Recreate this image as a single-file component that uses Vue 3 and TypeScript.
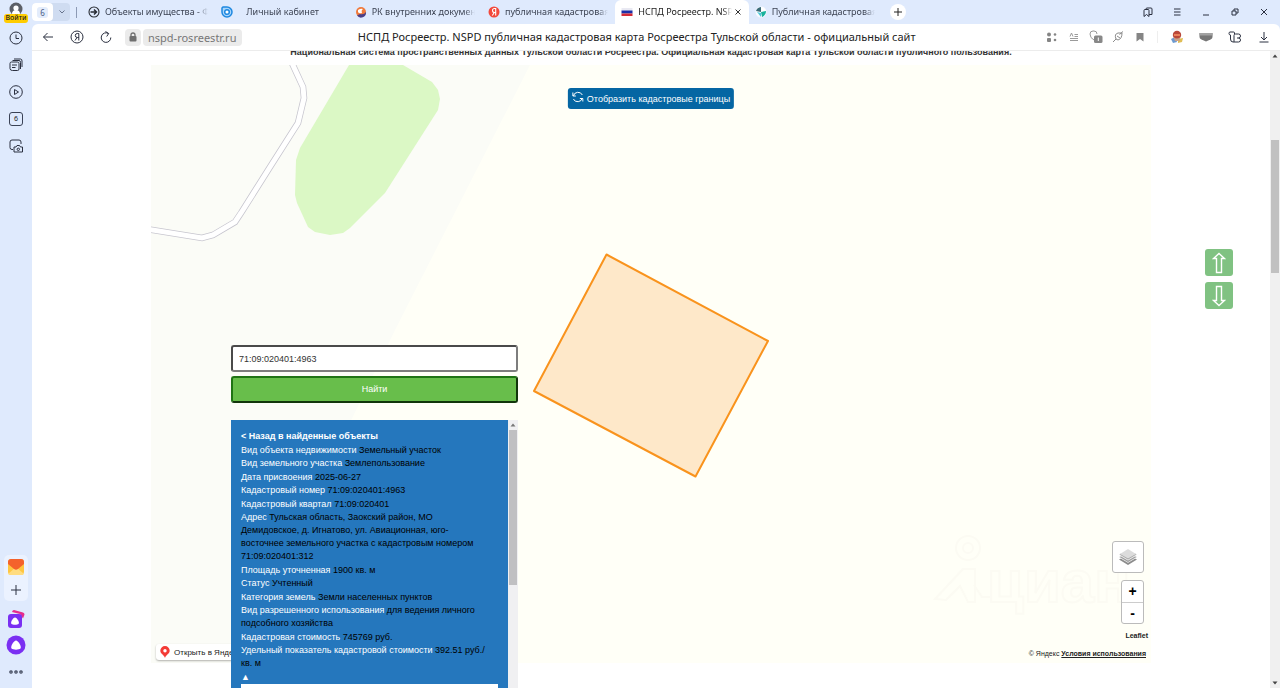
<script setup lang="ts">
import { ref } from 'vue'

interface Tab {
  title: string
  icon: 'arrow' | 'cabinet' | 'rk' | 'yandex' | 'flag' | 'map'
  active?: boolean
  wide?: boolean
}

interface Fact {
  label: string
  value: string
}

const tabs: Tab[] = [
  { title: 'Объекты имущества - ФКП', icon: 'arrow' },
  { title: 'Личный кабинет', icon: 'cabinet', wide: true },
  { title: 'РК внутренних документов', icon: 'rk' },
  { title: 'публичная кадастровая карта', icon: 'yandex' },
  { title: 'НСПД Росреестр. NSPD', icon: 'flag', active: true },
  { title: 'Публичная кадастровая карта', icon: 'map' },
]

const facts: Fact[] = [
  { label: 'Вид объекта недвижимости', value: 'Земельный участок' },
  { label: 'Вид земельного участка', value: 'Землепользование' },
  { label: 'Дата присвоения', value: '2025-06-27' },
  { label: 'Кадастровый номер', value: '71:09:020401:4963' },
  { label: 'Кадастровый квартал', value: '71:09:020401' },
  {
    label: 'Адрес',
    value:
      'Тульская область, Заокский район, МО Демидовское, д. Игнатово, ул. Авиационная, юго-восточнее земельного участка с кадастровым номером 71:09:020401:312',
  },
  { label: 'Площадь уточненная', value: '1900 кв. м' },
  { label: 'Статус', value: 'Учтенный' },
  { label: 'Категория земель', value: 'Земли населенных пунктов' },
  { label: 'Вид разрешенного использования', value: 'для ведения личного подсобного хозяйства' },
  { label: 'Кадастровая стоимость', value: '745769 руб.' },
  { label: 'Удельный показатель кадастровой стоимости', value: '392.51 руб./кв. м' },
]

const query = ref('71:09:020401:4963')
</script>

<template>
  <div class="browser">
    <aside class="side">
      <button class="login" aria-label="Войти">
        <svg width="16" height="13" viewBox="0 0 16 13">
          <circle cx="8" cy="8" r="6.5" fill="#5c5f66" />
          <circle cx="8" cy="7" r="2.6" fill="#fff" />
          <path d="M4 13c0-2.500 1.500-4 4-4s4 1.500 4 4z" fill="#fff" />
        </svg>
        <span>Войти</span>
      </button>
      <button class="side-btn" aria-label="История">
        <svg class="line" width="14" height="14" viewBox="0 0 14 14"><circle cx="7" cy="7" r="6" /><path d="M7 3.500V7.500H10" /></svg>
      </button>
      <button class="side-btn" aria-label="Коллекции">
        <svg class="line" width="14" height="14" viewBox="0 0 14 14">
          <path d="M2.500 4h6q1.500 0 1.500 1.500V11q0 1.500-1.500 1.500H3.500Q1 12.500 1 10.500V5.500Q1 4 2.500 4zM3 7h5M3 9.500h3.500M3.500 2.500h6.500q1.500 0 1.500 2V11M5 1h6.500Q13 1 13 3v6" />
        </svg>
      </button>
      <button class="side-btn" aria-label="Видео">
        <svg class="line" width="14" height="14" viewBox="0 0 14 14"><circle cx="7" cy="7" r="6.300" /><path d="M5.500 4.500v5l4-2.500z" /></svg>
      </button>
      <button class="side-btn" aria-label="Вкладки">
        <span class="count">6</span>
      </button>
      <button class="side-btn" aria-label="Снимок экрана">
        <svg class="line" width="14" height="14" viewBox="0 0 14 14">
          <path d="M4 10.500H3q-2 0-2-2V3q0-2 2-2h7q2 0 2 2v2M5 8h2l1-1.500h2.500l1 1.500h2v5H5z" /><circle cx="9.300" cy="10.300" r="1.200" />
        </svg>
      </button>
      <div class="side-gap"></div>
      <div class="side-box">
        <button class="side-app" aria-label="Почта">
          <svg width="16" height="16" viewBox="0 0 16 16">
            <rect width="16" height="16" rx="3.500" fill="#ffc640" />
            <path d="M0 15L8 8l8 7q-1 1-3 1H3q-2 0-3-1z" fill="#ffdc80" />
            <path d="M0 5V3q0-3 3-3h10q3 0 3 3v2l-6 5q-2 1.500-4 0z" fill="#f4622c" />
          </svg>
        </button>
        <button class="side-app" aria-label="Добавить">
          <svg class="line" width="12" height="12" viewBox="0 0 12 12"><path d="M6 1v10M1 6h10" /></svg>
        </button>
      </div>
      <button class="side-alice" aria-label="Алиса: картинки">
        <svg width="18" height="20" viewBox="0 0 18 20">
          <path d="M5 3q.5-2 2-2l9 2.500q1.500.500 1.500 2L16 9.500 13 5z" fill="#e52d8c" />
          <rect x="1" y="5" width="14" height="14" rx="3" fill="#7a2ff2" />
          <path d="M8 8.500c2 0 5 5 3.500 6.500-1 1-6 1-7 0C3 13.500 6 8.500 8 8.500z" fill="#fff" />
        </svg>
      </button>
      <button class="side-alice" aria-label="Алиса">
        <svg width="20" height="20" viewBox="0 0 20 20">
          <circle cx="10" cy="10" r="9.500" fill="#7a2ff2" />
          <path d="M10 5.500c2 0 6 6 4.500 8-1.500 1.500-7.500 1.500-9 0C4 11.500 8 5.500 10 5.500z" fill="#fff" />
        </svg>
      </button>
      <button class="side-btn" aria-label="Ещё">
        <svg width="14" height="4" viewBox="0 0 14 4" fill="none" stroke="#3a4256" stroke-width="1.200">
          <circle cx="2" cy="2" r="1.200" /><circle cx="7" cy="2" r="1.200" /><circle cx="12" cy="2" r="1.200" />
        </svg>
      </button>
    </aside>

    <div class="window">
      <header class="tabbar">
        <div class="group">
          <button class="group-count"><span>6</span></button>
          <button class="group-more" aria-label="Группы вкладок">
            <svg width="8" height="6" viewBox="0 0 8 6" fill="none" stroke="#67738c"><path d="M1.500 1.500L4 4l2.500-2.500" /></svg>
          </button>
        </div>
        <nav class="tabs">
          <a v-for="tab in tabs" :key="tab.title" href="#" class="tab" :class="{ active: tab.active, wide: tab.wide }">
            <svg class="fav" width="12" height="12" viewBox="0 0 12 12">
              <g v-if="tab.icon === 'arrow'" fill="none" stroke="#272b33" stroke-width="1.100">
                <circle cx="6" cy="6" r="5" /><path d="M2.500 6h6M6 3.500L8.500 6 6 8.500" stroke-width="1.500" />
              </g>
              <g v-else-if="tab.icon === 'cabinet'" fill="none" stroke="#1e88e0" stroke-width="1.500">
                <path d="M2 1h4a5 5 0 1 1-5 5V2z" fill="#a9d5fb" /><circle cx="6" cy="6" r="2.300" fill="#fff" />
              </g>
              <g v-else-if="tab.icon === 'rk'">
                <circle cx="6" cy="6" r="5" fill="#f07a3c" /><path d="M2 9.500A5 5 0 0 0 11 6Q9 9 5 8z" fill="#4b3f87" />
                <path d="M3 4q3-2 5-1-2 1-1 4-3 1-4-1z" fill="#fff" />
              </g>
              <g v-else-if="tab.icon === 'yandex'">
                <circle cx="6" cy="6" r="5.500" fill="#f2493b" />
                <path d="M7.700 9.500v-7H6.500q-2 0-2 2t2 2h1.200M6.300 6.500L4.300 9.500" fill="none" stroke="#fff" stroke-width="1.100" />
              </g>
              <g v-else-if="tab.icon === 'flag'">
                <path d="M0.500 2h11v3H.5z" fill="#e9e9f2" /><path d="M.5 4.500h11v3H.5z" fill="#1c2fa8" /><path d="M.5 7.500h11V10H.5z" fill="#d52b36" />
              </g>
              <g v-else>
                <circle cx="6" cy="6" r="5.500" fill="#f8fbff" />
                <path d="M1 5q1-3.500 5-4v5z" fill="#3c6c78" /><path d="M6 1q4 .5 5 5L6 6z" fill="#fff" /><path d="M6 6l5-1q0 4-4 6z" fill="#19b29c" /><path d="M2 6l4 5V7z" fill="#4cc8d8" />
              </g>
            </svg>
            <span class="tab-title">{{ tab.title }}</span>
            <svg v-if="tab.active" class="close" width="8" height="8" viewBox="0 0 8 8" stroke="#333"><path d="M1.500 1.500l5 5M6.500 1.500l-5 5" /></svg>
          </a>
        </nav>
        <button class="new-tab" aria-label="Новая вкладка">
          <svg width="10" height="10" viewBox="0 0 10 10" stroke="#222"><path d="M5 1v8M1 5h8" /></svg>
        </button>
        <div class="window-controls">
          <button aria-label="Панель закладок">
            <svg class="line" width="10" height="10" viewBox="0 0 10 10"><path d="M1 3.500q0-1 1-1h3q1 0 1 1v6L3.500 7.500 1 9.500zM3 2.500V2q0-1 1-1h4q1 0 1 1v5.500H6" /></svg>
          </button>
          <button aria-label="Меню">
            <svg class="line" width="10" height="10" viewBox="0 0 10 10"><path d="M2 2h6.500M2 5h6.500M2 8h6.500" /></svg>
          </button>
          <button aria-label="Свернуть">
            <svg class="line" width="10" height="10" viewBox="0 0 10 10"><path d="M2 8h6" /></svg>
          </button>
          <button aria-label="Развернуть">
            <svg class="line" width="10" height="10" viewBox="0 0 10 10"><path d="M2 4h4v4H2zM4 4V2h4v4H6" /></svg>
          </button>
          <button aria-label="Закрыть">
            <svg class="line" width="10" height="10" viewBox="0 0 10 10"><path d="M2 2l6 6M8 2l-6 6" /></svg>
          </button>
        </div>
      </header>

      <div class="toolbar">
        <button class="tool" aria-label="Назад">
          <svg class="line" width="12" height="12" viewBox="0 0 12 12"><path d="M11 6H1.500M5.500 2l-4 4 4 4" /></svg>
        </button>
        <button class="tool" aria-label="Яндекс">
          <svg class="line" width="14" height="14" viewBox="0 0 14 14"><circle cx="7" cy="7" r="6" /><path d="M8.800 10.500v-7H7.300q-2 0-2 2t2 2h1.500M7 7.500l-2 3" /></svg>
        </button>
        <button class="tool" aria-label="Обновить">
          <svg class="line" width="12" height="12" viewBox="0 0 12 12"><path d="M10.800 6.500A4.800 4.800 0 1 1 8.500 2.500M5.500.5l3.200 2-2 3" /></svg>
        </button>
        <button class="lock" aria-label="Сведения о сайте">
          <svg width="8" height="10" viewBox="0 0 8 10"><rect x="0.500" y="4" width="7" height="5.500" rx="1" fill="#6f6f6f" /><path d="M2 4V3q0-2 2-2t2 2v1" fill="none" stroke="#6f6f6f" stroke-width="1.300" /></svg>
        </button>
        <a class="host" href="#">nspd-rosreestr.ru</a>
        <div class="doc-title">НСПД Росреестр. NSPD публичная кадастровая карта Росреестра Тульской области - официальный сайт</div>
        <div class="page-tools">
          <button aria-label="Сервисы">
            <svg width="12" height="12" viewBox="0 0 12 12" fill="#858585"><circle cx="3" cy="3.500" r="2" /><rect x="1" y="7" width="4" height="4" rx="1" /><circle cx="9" cy="3.500" r="1.300" /><circle cx="9" cy="9" r="1.300" /></svg>
          </button>
          <button aria-label="Режим чтения">
            <svg width="10" height="10" viewBox="0 0 10 10" fill="none" stroke="#9b9b9b"><path d="M1 4.500L2.500 1 4 4.500M5.500 2.500H9M5.500 4.500H9M1 6.500h8M1 8.500h8" /></svg>
          </button>
          <button aria-label="Защита">
            <svg width="14" height="14" viewBox="0 0 14 14"><path d="M1 4q0-3 3-3h1q3 0 3 3M1 4q0 4 4 6" fill="none" stroke="#999" /><rect x="5" y="5.500" width="8.500" height="7.500" rx="1.500" fill="#888" /><path d="M9.300 7.500v3.500" stroke="#fff" /></svg>
          </button>
          <button aria-label="Расширение">
            <svg width="12" height="12" viewBox="0 0 12 12" fill="none" stroke="#8b8b8b"><path d="M1 11l3-3M4 8q-2-5 2-6h4q0 6-4 7zM7.500 3.500L11 .5M5 5l3 2" /></svg>
          </button>
          <button aria-label="Закладка">
            <svg width="8" height="10" viewBox="0 0 8 10" fill="#858585"><path d="M.5 1h7v8.500L4 7 .5 9.500z" /></svg>
          </button>
        </div>
        <div class="extensions">
          <button aria-label="Профиль">
            <svg width="14" height="14" viewBox="0 0 14 14"><path d="M1 9l4-2 2 5-4 1z" fill="#6d9ad0" /><path d="M8 9l5-1-1 4-4 1z" fill="#e0bd55" /><circle cx="7" cy="5" r="4.200" fill="#b9483a" /><path d="M3.500 7q3.500 3 7 0l-1 4H5z" fill="#caa188" /><path d="M4 4h6v2H4z" fill="#e9805a" /></svg>
          </button>
          <button aria-label="Переводчик">
            <svg width="14" height="10" viewBox="0 0 14 10"><path d="M.5 1h13v4q0 1.500-2 2.500L7 9.500 2.500 7.500q-2-1-2-2.500z" fill="#777" /><path d="M.5 1h13v2.500H.5z" fill="#a3a3a3" /></svg>
          </button>
          <button aria-label="Дополнения">
            <svg class="line" width="14" height="12" viewBox="0 0 14 12"><path d="M6.500 3V2q0-1-1-1H2Q1 1 1 2.500T2.500 4v4q0 3 2.500 3h1V4.500Q6 3 7.500 3h3Q12.500 3 12.500 5t-2 2H9M10.500 7q2 0 2 2t-2 2H6" /></svg>
          </button>
          <button aria-label="Загрузки">
            <svg class="line" width="12" height="12" viewBox="0 0 12 12"><path d="M6 1v8M3 6l3 3 3-3M1.500 11h9" /></svg>
          </button>
        </div>
      </div>

      <div class="viewport">
        <main class="page">
          <h1>Национальная система пространственных данных Тульской области Росреестра. Официальная кадастровая карта Тульской области публичного пользования.</h1>
          <section class="map">
            <svg class="canvas" viewBox="0 0 1000 598" preserveAspectRatio="xMidYMid slice">
              <rect width="1000" height="598" fill="#fffff7" />
              <path d="M0 0H379L244 265 82 598H0z" fill="#fbfcf7" />
              <path d="M198 0h54l29 17 6 8 2 9-2 11-53 83-35 35-7 5-13 2-15-3-7-5-11-24-2-8 1-35 4-12z" fill="#dbf8c5" />
              <path d="M140-4l12 26 1 11-6 25-28 44-29 46-6 9-22 13-11 3-56-9" fill="none" stroke="#c6c5ce" stroke-width="6.500" />
              <path d="M140-4l12 26 1 11-6 25-28 44-29 46-6 9-22 13-11 3-56-9" fill="none" stroke="#fff" stroke-width="5" />
              <g fill="none" stroke="#fcfbf3" stroke-width="2">
                <circle cx="817" cy="483" r="12" /><circle cx="817" cy="483" r="5" />
                <path d="M784 534l28-30h12v33h-7l-8-16-14 14zM823 520l8 12h8" />
                <text x="836" y="537" font-size="60" font-weight="700">циан</text>
              </g>
              <path d="M455.500 189.500L617 276 544.500 411.500 383 326z" fill="#fee8c9" stroke="#f9931d" stroke-width="2" stroke-linejoin="round" />
            </svg>

            <button class="borders">
              <svg width="12" height="12" viewBox="0 0 12 12" fill="none" stroke="#fff"><path d="M1.500 5A4.800 4.800 0 0 1 10.500 4M10.500 7A4.800 4.800 0 0 1 1.500 8M1 1.500V5h3M11 10.500V7.500H8" /></svg>
              <span>Отобразить кадастровые границы</span>
            </button>

            <a class="open-map" href="#">
              <svg width="10" height="12" viewBox="0 0 10 12"><path d="M5 0a4.700 4.700 0 0 1 4.700 4.700C9.700 8 6 8.500 5 12 4 8.500.3 8 .3 4.700A4.700 4.700 0 0 1 5 0z" fill="#f43b36" /><circle cx="5" cy="4.700" r="1.700" fill="#fff" /></svg>
              Открыть в Яндекс Картах
            </a>

            <div class="controls">
              <button class="layers" aria-label="Слои">
                <svg width="20" height="18" viewBox="0 0 20 18">
                  <path d="M1 11.500l9 5.500 9-5.500-2-1-7 4-7-4z" fill="#8c8c8c" />
                  <path d="M1 9l9 5.500L19 9l-2-1-7 4-7-4z" fill="#a0a0a0" stroke="#fff" stroke-width=".5" />
                  <path d="M1 6.500L10 12l9-5.500-2-1H3z" fill="#a6a6a6" stroke="#fff" stroke-width=".5" />
                  <path d="M10 1l8 5-8 4.500L2 6z" fill="#dcdcdc" />
                </svg>
              </button>
              <div class="zoom">
                <button aria-label="Приблизить">+</button>
                <button aria-label="Отдалить">-</button>
              </div>
              <a class="leaflet" href="#">Leaflet</a>
              <p class="copyright">© Яндекс <a href="#">Условия использования</a></p>
            </div>

            <form class="finder" @submit.prevent>
              <input v-model="query" type="text" aria-label="Кадастровый номер">
              <button class="find" type="submit">Найти</button>
              <div class="result">
                <div class="details">
                  <a class="row back" href="#">&lt; Назад в найденные объекты</a>
                  <p v-for="fact in facts" :key="fact.label" class="row"><span class="label">{{ fact.label }}</span> {{ fact.value }}</p>
                  <p class="row label">▲</p>
                  <div class="sheet"></div>
                </div>
                <div class="inner-scroll">
                  <svg width="6" height="4" viewBox="0 0 6 4"><path d="M0.500 3.500h5L3 .5z" fill="#777" /></svg>
                  <div class="inner-thumb"></div>
                </div>
              </div>
            </form>
          </section>

          <div class="jump">
            <button aria-label="Наверх">
              <svg width="14" height="22" viewBox="0 0 14 22"><path d="M7 1.500l5.500 5H9.500v14h-5v-14h-3z" /></svg>
            </button>
            <button aria-label="Вниз">
              <svg width="14" height="22" viewBox="0 0 14 22"><path d="M7 20.500l5.500-5H9.500v-14h-5v14h-3z" /></svg>
            </button>
          </div>
        </main>
        <div class="page-scroll">
          <svg width="6" height="4" viewBox="0 0 6 4"><path d="M0.500 3.500h5L3 .5z" fill="#444" /></svg>
          <div class="page-thumb"></div>
          <svg width="6" height="4" viewBox="0 0 6 4"><path d="M0.500.5h5L3 3.500z" fill="#444" /></svg>
        </div>
      </div>
    </div>
  </div>
</template>

<style>
body {
  margin: 0;
  overflow: hidden;
}
</style>

<style scoped>
* {
  box-sizing: border-box;
}
button {
  padding: 0;
  border: 0;
  background: none;
  font: inherit;
  color: inherit;
  display: flex;
  align-items: center;
  justify-content: center;
}
a {
  color: inherit;
  text-decoration: none;
}
svg {
  flex: none;
  display: block;
}
.line {
  fill: none;
  stroke: #2b3040;
  stroke-width: 1;
}
.browser {
  display: flex;
  height: 100vh;
  background: #dfeafd;
  font-family: "Noto Sans", sans-serif;
  font-size: 9px;
  color: #222;
}
.side {
  width: 32px;
  flex: none;
  display: flex;
  flex-direction: column;
  align-items: center;
  padding-bottom: 3px;
}
.login {
  flex-direction: column;
  height: 24px;
}
.login span {
  width: 24px;
  height: 9px;
  border-radius: 3px;
  background: #fc0;
  font-size: 7px;
  line-height: 8px;
  font-weight: 500;
  text-align: center;
}
.side-btn {
  width: 32px;
  height: 27px;
}
.count {
  width: 14px;
  height: 14px;
  border: 1px solid #3a4256;
  border-radius: 3px;
  font-size: 7px;
  line-height: 12px;
}
.side-gap {
  flex: 1;
}
.side-box {
  width: 24px;
  margin-bottom: 5px;
  border-radius: 5px;
  background: #ebf2ff;
}
.side-app {
  width: 24px;
  height: 23px;
}
.side-alice {
  height: 26px;
}
.window {
  flex: 1;
  min-width: 0;
  display: flex;
  flex-direction: column;
}
.tabbar {
  height: 24px;
  flex: none;
  display: flex;
  align-items: center;
}
.group {
  display: flex;
  height: 18px;
  width: 38px;
  border-radius: 4px;
  background: #cfdcf1;
}
.group-count {
  width: 21px;
  border-radius: 4px;
  background: #fff;
  font-size: 8px;
  color: #4b5d86;
}
.group-count span {
  width: 11px;
  border-radius: 3px;
  background: #e3ecfb;
}
.group-more {
  flex: 1;
}
.tabs {
  flex: 0 1 806px;
  min-width: 0;
  height: 24px;
  margin-left: 6px;
  padding-left: 6px;
  display: flex;
  position: relative;
}
.tabs::before {
  content: "";
  height: 11px;
  border-left: 1px solid #8d9ab5;
  position: absolute;
  left: 0;
  top: 7px;
}
.tab {
  flex: 1;
  min-width: 0;
  display: flex;
  align-items: center;
  gap: 5px;
  padding: 0 7px 0 6px;
  color: #3c4353;
  line-height: 24px;
  border-radius: 6px 6px 0 0;
}
.tab.wide {
  gap: 13px;
}
.tab.active {
  background: #fff;
  color: #222;
}
.tab.active .tab-title {
  margin-right: -3px;
}
.tab-title {
  flex: 1;
  overflow: hidden;
  white-space: nowrap;
  mask-image: linear-gradient(90deg, #000 90%, transparent);
}
.new-tab {
  width: 16px;
  height: 16px;
  margin-left: 8px;
  border-radius: 8px;
  background: #fff;
}
.window-controls {
  margin-left: auto;
  display: flex;
  padding-right: 2px;
}
.window-controls button,
.extensions button {
  width: 29px;
  height: 24px;
}
.toolbar {
  height: 27px;
  flex: none;
  display: flex;
  align-items: center;
  padding: 0 2px 0 1px;
  border-radius: 6px 6px 0 0;
  border-bottom: 1px solid #ececec;
  background: #fff;
}
.tool {
  width: 29px;
  height: 26px;
}
.lock {
  width: 16px;
  height: 17px;
  margin: 0 2px 0 5px;
  border-radius: 4px;
  background: #ebebeb;
}
.host {
  height: 17px;
  padding: 0 6px 0 5px;
  border-radius: 4px;
  background: #ebebeb;
  color: #777;
  font-size: 11px;
  line-height: 17px;
}
.doc-title {
  flex: 1;
  min-width: 0;
  overflow: hidden;
  white-space: nowrap;
  text-align: center;
  font-size: 11px;
  line-height: 26px;
  padding-right: 10px;
}
.page-tools {
  display: flex;
  padding-right: 6px;
  margin-right: 4px;
  border-right: 1px solid #eee;
}
.page-tools button {
  width: 22px;
  height: 12px;
}
.extensions {
  display: flex;
}
.viewport {
  flex: 1;
  min-height: 0;
  display: flex;
  background: #fff;
}
.page {
  flex: 1;
  min-width: 0;
  overflow: hidden;
  position: relative;
  font-family: "Liberation Sans", Arial, sans-serif;
  font-size: 9px;
  line-height: 13px;
}
h1 {
  margin: -5px 0 6px;
  font-size: 9px;
  line-height: 13px;
  text-align: center;
  color: #333;
}
.map {
  position: relative;
  max-width: 1000px;
  margin: 0 auto;
}
.canvas {
  width: 100%;
  height: auto;
}
.borders {
  position: absolute;
  top: 23px;
  left: 50%;
  transform: translateX(-50%);
  height: 21px;
  padding: 0 4px;
  gap: 3px;
  border-radius: 3px;
  background: #0566a3;
  color: #fff;
  white-space: nowrap;
}
.borders svg {
  margin-bottom: 4px;
}
.borders span {
  padding-top: 2px;
}
.open-map {
  position: absolute;
  left: 5px;
  bottom: 3px;
  height: 16px;
  padding: 0 6px 0 4px;
  display: flex;
  align-items: center;
  gap: 4px;
  border-radius: 3px;
  background: #fff;
  box-shadow: 0 1px 2px rgba(0, 0, 0, 0.3);
  font-size: 8px;
  white-space: nowrap;
}
.controls {
  position: absolute;
  right: 3px;
  bottom: 3px;
  display: flex;
  flex-direction: column;
  align-items: flex-end;
}
.layers,
.zoom {
  border: 1px solid #bbb;
  border-radius: 3px;
  background: #fff;
}
.layers {
  width: 32px;
  height: 32px;
  margin: 0 4px 7px 0;
}
.zoom {
  width: 23px;
  margin: 0 4px 6px 0;
  font-size: 14px;
  font-weight: 700;
  color: #000;
}
.zoom button {
  width: 21px;
  height: 21px;
}
.zoom button + button {
  border-top: 1px solid #ccc;
}
.leaflet,
.copyright {
  font-size: 7px;
  line-height: 12px;
}
.leaflet {
  font-weight: 700;
  margin-bottom: 6px;
}
.copyright {
  margin: 0 2px 0 0;
}
.copyright a {
  font-weight: 700;
  text-decoration: underline;
}
.finder {
  position: absolute;
  left: 80px;
  top: 280px;
  width: 287px;
  display: flex;
  flex-direction: column;
}
.finder input {
  height: 27px;
  padding: 0 6px;
  border: 2px solid;
  border-color: #4a4a4a #7d7d7d #7d7d7d #4a4a4a;
  border-radius: 3px;
  background: #fff;
  font: inherit;
  color: #333;
}
.find {
  height: 27px;
  margin: 4px 0 17px;
  border: 2px solid;
  border-color: #1f7414 #12350c #12350c #1f7414;
  border-radius: 3px;
  background: #68be4b;
  color: #fff;
}
.result {
  display: flex;
  background: #2577bd;
}
.details {
  flex: 1;
  min-width: 0;
  padding: 10px 10px 0;
  color: #000;
}
.row {
  display: block;
  margin: 0;
  padding-right: 8px;
}
.row:nth-child(odd) {
  margin-bottom: 1px;
}
.back {
  color: #fff;
  font-weight: 700;
}
.label {
  color: #fff;
}
.sheet {
  height: 40px;
  background: #fff;
}
.inner-scroll {
  width: 10px;
  padding: 3px 0;
  display: flex;
  flex-direction: column;
  align-items: center;
  gap: 3px;
  background: #f0f0f2;
}
.inner-thumb {
  width: 8px;
  height: 155px;
  background: #c0c0c2;
}
.jump {
  position: absolute;
  right: 37px;
  top: 198px;
  display: flex;
  flex-direction: column;
  gap: 6px;
}
.jump button {
  width: 28px;
  height: 27px;
  border-radius: 3px;
  background: #80c282;
}
.jump path {
  fill: none;
  stroke: #fff;
  stroke-width: 1.4;
}
.page-scroll {
  width: 10px;
  flex: none;
  padding: 3px 0;
  display: flex;
  flex-direction: column;
  align-items: center;
  background: #f0f0f0;
}
.page-thumb {
  width: 8px;
  height: 133px;
  margin: 82px 0 auto;
  background: #c1c1c1;
}
</style>
